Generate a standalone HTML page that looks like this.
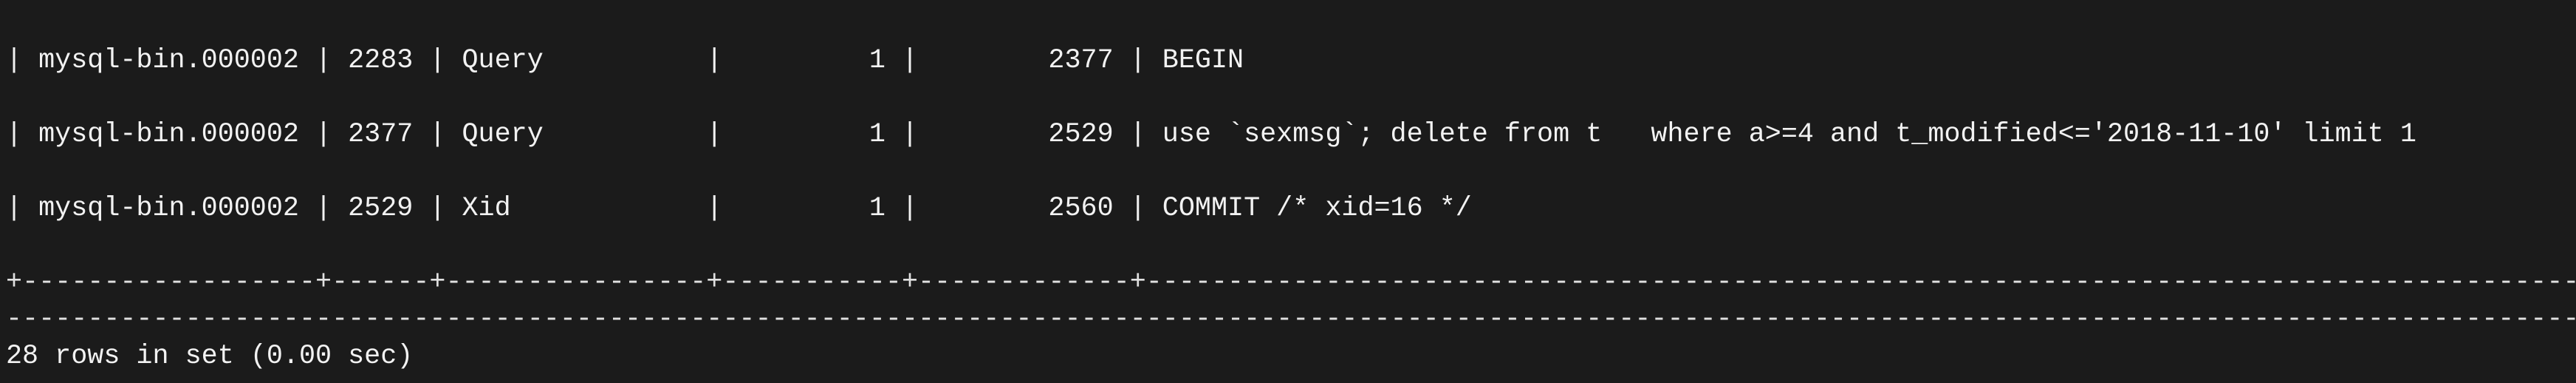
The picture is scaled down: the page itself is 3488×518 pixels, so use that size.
<!DOCTYPE html>
<html><head><meta charset="utf-8"><style>
html,body{margin:0;padding:0;background:#1b1b1b;width:3488px;height:518px;overflow:hidden}
.l{position:absolute;left:8px;white-space:pre;font-family:"Liberation Mono","DejaVu Sans Mono",monospace;font-size:36.75px;line-height:36.75px;color:#f2f2f2;width:3480px;overflow:hidden}
</style></head><body>
<div class="l" style="top:64px">| mysql-bin.000002 | 2283 | Query          |         1 |        2377 | BEGIN</div>
<div class="l" style="top:164px">| mysql-bin.000002 | 2377 | Query          |         1 |        2529 | use `sexmsg`; delete from t   where a&gt;=4 and t_modified&lt;='2018-11-10' limit 1</div>
<div class="l" style="top:264px">| mysql-bin.000002 | 2529 | Xid            |         1 |        2560 | COMMIT /* xid=16 */</div>
<div class="l" style="top:364px;color:#e0e0e0">+------------------+------+----------------+-----------+-------------+-------------------------------------------------------------------------------------------------------------------------------</div>
<div class="l" style="top:414px;color:#e0e0e0">--------------------------------------------------------------------------------------------------------------------------------------------------------------------------------</div>
<div class="l" style="top:464px">28 rows in set (0.00 sec)</div>
</body></html>
